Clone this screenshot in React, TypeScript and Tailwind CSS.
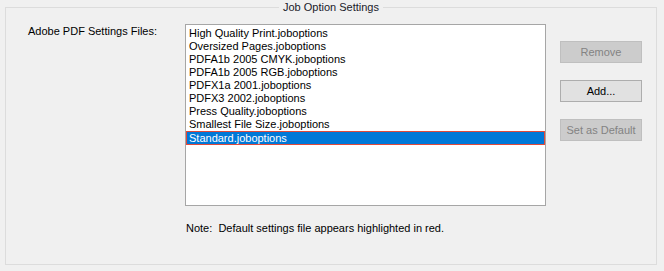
const files = [
  "High Quality Print.joboptions",
  "Oversized Pages.joboptions",
  "PDFA1b 2005 CMYK.joboptions",
  "PDFA1b 2005 RGB.joboptions",
  "PDFX1a 2001.joboptions",
  "PDFX3 2002.joboptions",
  "Press Quality.joboptions",
  "Smallest File Size.joboptions",
  "Standard.joboptions",
];

function Btn({ label, disabled }: { label: string; disabled?: boolean }) {
  return (
    <button
      className={
        disabled
          ? "w-[82px] h-[22px] border border-[#bfbfbf] bg-[#cccccc] text-[#838383] leading-[20px]"
          : "w-[82px] h-[22px] border border-[#adadad] bg-[#e1e1e1] text-black leading-[20px]"
      }
    >
      {label}
    </button>
  );
}

export default function App() {
  return (
    <div className="w-[664px] h-[271px] bg-[#f0f0f0] text-[11px] text-black font-['Liberation_Sans',Arial,sans-serif] overflow-hidden pt-[1px]">
      <fieldset className="ml-[5px] w-[652px] h-[264px] border border-[#dcdcdc]">
        <legend className="mx-auto px-[4px] leading-[13px] text-[#1a1a2a]">Job Option Settings</legend>
        <div className="flex items-start pt-[10px] pl-[22px]">
          <div className="w-[157px] leading-[13px] mt-[1px]">Adobe PDF Settings Files:</div>
          <div className="flex flex-col">
            <div className="w-[361px] h-[182px] border border-[#a6a6a6] bg-white pt-[2px]">
              {files.map((f, i) =>
                i === files.length - 1 ? (
                  <div
                    key={f}
                    className="h-[14px] leading-[12px] pl-[2px] bg-[#0078d7] text-white border border-[#e04a3a]"
                  >
                    {f}
                  </div>
                ) : (
                  <div key={f} className="h-[13px] leading-[13px] pl-[3px]">
                    {f}
                  </div>
                )
              )}
            </div>
            <div className="mt-[16px] pl-[1px] leading-[13px] whitespace-pre">
              {"Note:  Default settings file appears highlighted in red."}
            </div>
          </div>
          <div className="ml-[14px] mt-[17px] flex flex-col gap-[17px]">
            <Btn label="Remove" disabled />
            <Btn label="Add..." />
            <Btn label="Set as Default" disabled />
          </div>
        </div>
      </fieldset>
    </div>
  );
}
